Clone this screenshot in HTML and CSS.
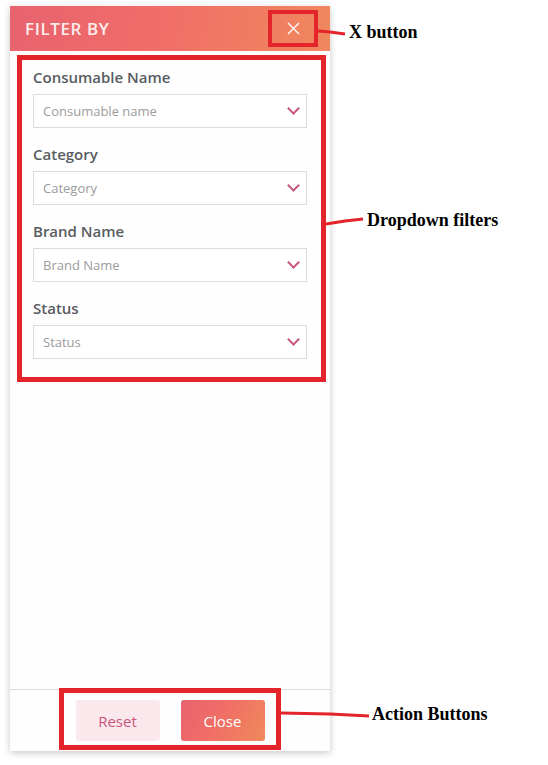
FILE: index.html
```html
<!DOCTYPE html>
<html lang="en">
<head>
  <meta charset="UTF-8" />
  <title>Filter panel</title>
  <link rel="stylesheet" href="styles.css">
</head>
<body>
  <div class="sheet">
    <div class="panel">
      <div class="panel-head">
        <span class="panel-title">FILTER BY</span>
        <button class="x-btn" aria-label="Close">
          <svg width="13" height="13" viewBox="0 0 13 13"><path d="M1 1 L12 12 M12 1 L1 12" stroke="#fff" stroke-width="1.4" fill="none"/></svg>
        </button>
      </div>

      <div class="panel-body">
        <div class="field">
          <label>Consumable Name</label>
          <div class="select"><span>Consumable name</span><i class="chev"></i></div>
        </div>
        <div class="field">
          <label>Category</label>
          <div class="select"><span>Category</span><i class="chev"></i></div>
        </div>
        <div class="field">
          <label>Brand Name</label>
          <div class="select"><span>Brand Name</span><i class="chev"></i></div>
        </div>
        <div class="field">
          <label>Status</label>
          <div class="select"><span>Status</span><i class="chev"></i></div>
        </div>
      </div>

      <div class="panel-foot">
        <button class="btn btn-reset">Reset</button>
        <button class="btn btn-close">Close</button>
      </div>
    </div>

    <!-- annotations -->
    <div class="mark mark-x"></div>
    <div class="mark mark-filters"></div>
    <div class="mark mark-actions"></div>
    <svg class="leaders" width="548" height="765" viewBox="0 0 548 765">
      <path d="M318 31 L330 32 L345 34" stroke="#e3242b" stroke-width="3" fill="none"/>
      <path d="M326 224 L345 221 L363 219" stroke="#e3242b" stroke-width="3" fill="none"/>
      <path d="M281 713 L330 714 L369 716" stroke="#e3242b" stroke-width="3" fill="none"/>
    </svg>
    <span class="note note-x">X button</span>
    <span class="note note-filters">Dropdown filters</span>
    <span class="note note-actions">Action Buttons</span>
  </div>
</body>
</html>
```

FILE: styles.css
```css
html, body {
  margin: 0;
  background: #fff;
}
.sheet {
  position: relative;
  width: 548px;
  height: 765px;
  padding-top: 6px;
  box-sizing: border-box;
  font-family: "Open Sans", "Noto Sans", sans-serif;
}
.panel {
  margin-left: 10px;
  width: 320px;
  height: 745px;
  background: #fefefe;
  box-shadow: 0 2px 7px rgba(0, 0, 0, 0.22);
  display: flex;
  flex-direction: column;
}
.panel-head {
  height: 45px;
  display: flex;
  align-items: center;
  justify-content: space-between;
  padding: 0 12px 0 15px;
  background: linear-gradient(100deg, #e8636f 0%, #f06d68 45%, #f0885e 100%);
}
.panel-title {
  color: rgba(255, 255, 255, 0.9);
  font-size: 17px;
  font-weight: 600;
  letter-spacing: 0.6px;
}
.x-btn {
  width: 40px;
  height: 30px;
  border: 0;
  background: transparent;
  display: flex;
  align-items: center;
  justify-content: center;
  padding: 0;
  margin-right: 5px;
}
.panel-body {
  flex: 1;
  padding: 16px 23px 0;
}
.field {
  margin-bottom: 16px;
}
.field label {
  display: block;
  height: 20px;
  line-height: 20px;
  font-size: 15px;
  font-weight: 600;
  color: #585c61;
  margin-bottom: 7px;
}
.select {
  height: 34px;
  border: 1px solid #dcdcdc;
  box-sizing: border-box;
  display: flex;
  align-items: center;
  justify-content: space-between;
  padding: 0 8px 0 9px;
  background: #fff;
}
.select span {
  font-size: 13px;
  color: #9c9c9c;
}
.chev {
  width: 7px;
  height: 7px;
  border-right: 2px solid #c9557c;
  border-bottom: 2px solid #c9557c;
  transform: rotate(45deg);
  margin: -5px 0 0 0;
}
.panel-foot {
  border-top: 1px solid #dedbe0;
  height: 62px;
  display: flex;
  justify-content: center;
  align-items: flex-start;
  gap: 21px;
  padding-top: 10px;
  box-sizing: border-box;
}
.btn {
  width: 84px;
  height: 41px;
  border: 0;
  border-radius: 3px;
  font-family: "Open Sans", "Noto Sans", sans-serif;
  font-size: 15px;
}
.btn-reset {
  background: #fae8ed;
  color: #c9557c;
}
.btn-close {
  background: linear-gradient(120deg, #e6636f 0%, #f06e66 45%, #f08a5c 100%);
  color: #fff;
}

/* annotation overlay */
.mark {
  position: absolute;
  border: 4px solid #e3242b;
  box-sizing: border-box;
}
.mark-x {
  left: 268px;
  top: 10px;
  width: 50px;
  height: 37px;
}
.mark-filters {
  left: 17px;
  top: 55px;
  width: 309px;
  height: 327px;
  border-width: 5px;
}
.mark-actions {
  left: 59px;
  top: 688px;
  width: 222px;
  height: 62px;
  border-width: 5px;
}
.leaders {
  position: absolute;
  left: 0;
  top: 0;
}
.note {
  position: absolute;
  font-family: "Liberation Serif", serif;
  font-weight: bold;
  font-size: 18px;
  color: #000;
  line-height: 20px;
}
.note-x {
  left: 349px;
  top: 22px;
}
.note-filters {
  left: 367px;
  top: 210px;
}
.note-actions {
  left: 372px;
  top: 704px;
}
```
